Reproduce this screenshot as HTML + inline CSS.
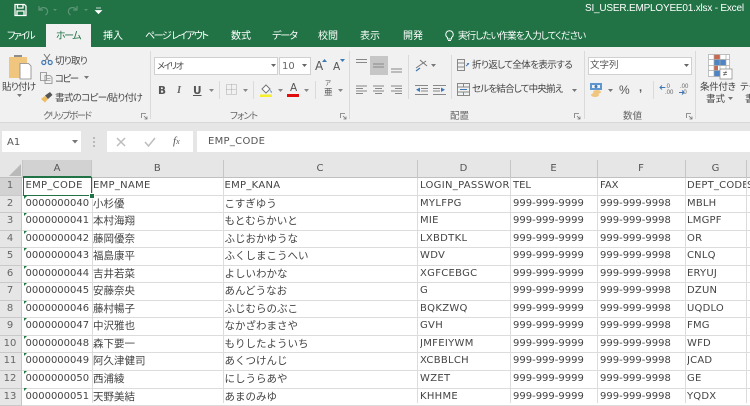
<!DOCTYPE html>
<html lang="ja"><head><meta charset="utf-8"><style>
html,body{margin:0;padding:0}
body{width:750px;height:403px;overflow:hidden;position:relative;background:#fff;font-family:"Liberation Sans","Noto Sans CJK JP",sans-serif;color:#444}
.a{position:absolute}
.t{position:absolute;white-space:nowrap;line-height:14px;font-size:9.5px;color:#444;margin-top:2px;font-feature-settings:"palt"}
.tab{color:#fff;font-size:10px;top:28px}
.lab{color:#666;font-size:9.5px;top:108px}
.sep{position:absolute;width:1px;background:#dadada}
svg{position:absolute;overflow:visible}
#grid{position:absolute;left:0;top:178px;width:750px;font-family:"DejaVu Sans","Noto Sans CJK JP",sans-serif;font-size:10px;color:#444}
.r{position:relative;height:17.55px;line-height:16.5px;box-sizing:border-box;border-bottom:1px solid #dcdcdc;white-space:nowrap}
.r span{position:absolute;top:0;overflow:hidden;height:16px}
.r .h{left:0;width:22px;background:#e6e6e6;color:#666;text-align:center;height:17.5px;border-right:1px solid #c6c6c6;border-bottom:1px solid #c9c9c9;box-sizing:border-box;font-size:10px;padding-right:1px}
.a1{left:25.5px;width:65px}.b1{left:93px;width:129px;font-size:10.5px}.c1{left:224.5px;width:192px;font-size:10.5px}.d1{left:420px;width:90px;letter-spacing:.3px}.e1{left:513px;width:84px}.f1{left:600px;width:85px}.g1{left:687px;width:60px;letter-spacing:.2px}
.v{position:absolute;top:178px;height:225px;width:1px;background:#dcdcdc}
.tri{position:absolute;left:24px;width:0;height:0;border-top:3px solid #1f7a3f;border-right:3px solid transparent;margin-top:0}
.ch{position:absolute;top:160px;height:18px;line-height:17px;text-align:center;font-family:"DejaVu Sans",sans-serif;font-size:10px;color:#555;background:#e6e6e6;border-right:1px solid #c6c6c6;border-bottom:1px solid #c0c0c0;box-sizing:border-box}
</style></head><body>

<div class="a" style="left:0;top:0;width:750px;height:47px;background:#217346"></div>
<svg style="left:14px;top:3px" width="13" height="14" viewBox="0 0 13 14"><path d="M1 1.5h9.5l1.5 1.5v9.5H1zM3.5 1.5v3.5h5.500v-3.500M3 12.500v-4.500h7v4.500" fill="none" stroke="#fff" stroke-width="1.300"/></svg>
<svg style="left:37px;top:4px" width="60" height="12" viewBox="0 0 60 12"><path d="M2 2v4h4M2.500 6c2-3.500 7-3 8 .5.4 2-.5 3.500-2 4.500" fill="none" stroke="#5d9577" stroke-width="1.200"/><path d="M16 5l2 2 2-2z" fill="#5d9577"/><path d="M40 2v4h-4M39.500 6c-2-3.500-7-3-8 .5-.4 2 .5 3.500 2 4.500" fill="none" stroke="#5d9577" stroke-width="1.200"/><path d="M47 5l2 2 2-2z" fill="#5d9577"/></svg>
<svg style="left:95px;top:7px" width="7" height="7" viewBox="0 0 7 7"><path d="M1 1h5M.5 3.500h6L3.500 6.500z" fill="#fff" stroke="#fff" stroke-width=".8"/></svg>
<div class="t" style="left:585px;top:0;color:#fff;font-size:10px;letter-spacing:-.2px">SI_USER.EMPLOYEE01.xlsx - Excel</div>

<div class="a" style="left:46px;top:24px;width:45px;height:24px;background:#f1f1f1"></div>
<div class="t tab" style="left:7px;letter-spacing:-2px">ファイル</div>
<div class="t tab" style="left:56px;color:#217346;letter-spacing:-1.500px">ホーム</div>
<div class="t tab" style="left:103px">挿入</div>
<div class="t tab" style="left:145px;letter-spacing:-1.500px">ページ レイアウト</div>
<div class="t tab" style="left:231px">数式</div>
<div class="t tab" style="left:272px;letter-spacing:-1px">データ</div>
<div class="t tab" style="left:318px">校閲</div>
<div class="t tab" style="left:360px">表示</div>
<div class="t tab" style="left:403px">開発</div>
<svg style="left:445px;top:30px" width="9" height="12" viewBox="0 0 9 12"><path d="M4.500 .7a3.700 3.700 0 0 0-2 6.800v1.500h4V7.500a3.700 3.700 0 0 0-2-6.800zM3 10.500h3" fill="none" stroke="#fff" stroke-width="1"/></svg>
<div class="t tab" style="left:458px;font-size:9.500px;letter-spacing:-.9px">実行したい作業を入力してください</div>

<div class="a" style="left:0;top:47px;width:750px;height:75px;background:#f1f1f1"></div>
<div class="a" style="left:0;top:122px;width:750px;height:38px;background:#e6e6e6;border-top:1px solid #d8d8d8;box-sizing:border-box"></div>

<svg style="left:8px;top:54px" width="24" height="26" viewBox="0 0 24 26"><path d="M1 3h18v21H1z" fill="#f0c67f"/><path d="M6 3h8V1H6z" fill="#8d8d8d"/><path d="M12 9.500h8.500l2.500 2.500v13H12z" fill="#fff" stroke="#888" stroke-width=".8"/></svg>
<div class="t" style="left:2px;top:79px;font-size:9.500px;letter-spacing:-.7px">貼り付け</div>
<svg style="left:17px;top:94px" width="6" height="4"><path d="M0 0h5L2.500 3z" fill="#777"/></svg>
<svg style="left:41px;top:53px" width="12" height="12" viewBox="0 0 12 12"><path d="M3 1l5 7M9 1L4 8" stroke="#777" fill="none"/><circle cx="2.800" cy="9.500" r="2" fill="none" stroke="#3e78b4" stroke-width="1.200"/><circle cx="9.200" cy="9.500" r="2" fill="none" stroke="#3e78b4" stroke-width="1.200"/></svg>
<div class="t" style="left:55px;top:53px;font-size:9.500px;letter-spacing:-.7px">切り取り</div>
<svg style="left:40px;top:72px" width="13" height="12" viewBox="0 0 13 12"><path d="M.5.500h6v8h-6zM5 3.500h5l2 2v6H5z" fill="#f1f1f1" stroke="#888" stroke-width=".8"/><path d="M6.500 6.500h4M6.500 8.500h4" stroke="#999" stroke-width=".7"/></svg>
<div class="t" style="left:55px;top:71px;font-size:9.500px;letter-spacing:-1.500px">コピー</div>
<svg style="left:84px;top:76px" width="5" height="3"><path d="M0 0h5L2.500 3z" fill="#777"/></svg>
<svg style="left:40px;top:91px" width="13" height="12" viewBox="0 0 13 12"><path d="M1 8l4-3 3 3-3 3.500z" fill="#eebc5f"/><path d="M5 4.500l5-3.500 2.500 3L8 8z" fill="#555"/></svg>
<div class="t" style="left:55px;top:90px;font-size:9.500px;letter-spacing:-.65px">書式のコピー/貼り付け</div>
<div class="t lab" style="left:43px;letter-spacing:-1.600px">クリップボード</div>
<svg style="left:141px;top:113px" width="7" height="7"><path d="M.5 5V.5H5M3 3l3 3M6 3.500V6H3.500" fill="none" stroke="#777" stroke-width=".8"/></svg>
<div class="sep" style="left:150px;top:51px;height:68px"></div>

<div class="a" style="left:154px;top:57px;width:124px;height:18px;background:#fff;border:1px solid #d0d0d0;box-sizing:border-box"></div>
<div class="t" style="left:157px;top:57px;font-size:9px;letter-spacing:-1.500px">メイリオ</div>
<svg style="left:271px;top:64px" width="5" height="3"><path d="M0 0h5L2.500 3z" fill="#666"/></svg>
<div class="a" style="left:279px;top:57px;width:32px;height:18px;background:#fff;border:1px solid #d0d0d0;box-sizing:border-box"></div>
<div class="t" style="left:282px;top:58px;font-size:10px;color:#666;font-family:'DejaVu Sans',sans-serif">10</div>
<svg style="left:302px;top:64px" width="5" height="3"><path d="M0 0h5L2.500 3z" fill="#666"/></svg>
<div class="t" style="left:315px;top:57px;font-size:12px;font-family:'DejaVu Sans',sans-serif;color:#555">A</div>
<svg style="left:322px;top:59px" width="5" height="4"><path d="M0 3l2.500-3 2.500 3z" fill="#3e78b4"/></svg>
<div class="t" style="left:333px;top:58px;font-size:10.500px;font-family:'DejaVu Sans',sans-serif;color:#555">A</div>
<svg style="left:340px;top:59px" width="5" height="4"><path d="M0 0h5L2.500 3z" fill="#3e78b4"/></svg>

<div class="t" style="left:158px;top:82px;font-size:10.500px;font-weight:bold;color:#555;font-family:'DejaVu Sans',sans-serif">B</div>
<div class="t" style="left:177px;top:82px;font-size:10.500px;font-style:italic;font-weight:bold;color:#666;font-family:'Liberation Serif',serif">I</div>
<div class="t" style="left:193px;top:82px;font-size:10.500px;text-decoration:underline;color:#555;font-family:'DejaVu Sans',sans-serif;font-weight:bold">U</div>
<svg style="left:209px;top:89px" width="5" height="3"><path d="M0 0h5L2.500 3z" fill="#888"/></svg>
<div class="sep" style="left:219px;top:81px;height:18px"></div>
<svg style="left:226px;top:84px" width="11" height="11"><path d="M.5.500h10v10H.5zM5.500.500v10M.5 5.500h10" fill="none" stroke="#999" stroke-width=".8" stroke-dasharray="1 1"/></svg>
<svg style="left:243px;top:89px" width="5" height="3"><path d="M0 0h5L2.500 3z" fill="#888"/></svg>
<div class="sep" style="left:253px;top:81px;height:18px"></div>
<svg style="left:260px;top:83px" width="13" height="14" viewBox="0 0 13 14"><path d="M2 6l4-4 4 4-4 4z" fill="#fff" stroke="#777"/><path d="M10 6.500l2 2.500-1 1z" fill="#3e78b4"/><path d="M0 11.500h12v2.500H0z" fill="#f5ef2c"/></svg>
<svg style="left:278px;top:89px" width="5" height="3"><path d="M0 0h5L2.500 3z" fill="#888"/></svg>
<div class="t" style="left:290px;top:79px;font-size:10.500px;font-family:'DejaVu Sans',sans-serif;color:#555">A</div>
<div class="a" style="left:287px;top:94px;width:12px;height:3px;background:#e00d0d"></div>
<svg style="left:304px;top:89px" width="5" height="3"><path d="M0 0h5L2.500 3z" fill="#888"/></svg>
<div class="sep" style="left:315px;top:81px;height:18px"></div>
<div class="t" style="left:325px;top:78px;font-size:6.500px;color:#555;line-height:8px">ア</div>
<div class="t" style="left:324px;top:86px;font-size:8.500px;color:#555;line-height:8px">亜</div>
<svg style="left:338px;top:89px" width="5" height="3"><path d="M0 0h5L2.500 3z" fill="#888"/></svg>
<div class="t lab" style="left:230px;letter-spacing:-1px">フォント</div>
<svg style="left:340px;top:113px" width="7" height="7"><path d="M.5 5V.5H5M3 3l3 3M6 3.500V6H3.500" fill="none" stroke="#777" stroke-width=".8"/></svg>
<div class="sep" style="left:349px;top:51px;height:68px"></div>

<div class="a" style="left:370px;top:56px;width:18px;height:19px;background:#c6c6c6"></div>
<svg style="left:355px;top:58px" width="50" height="15" viewBox="0 0 50 15" stroke="#888" stroke-width="1"><path d="M1 1.500h11M1 4.500h11M18 6h11M18 9h11M36 11h11M36 14h11"/></svg>
<svg style="left:355px;top:85px" width="50" height="10" viewBox="0 0 50 10" stroke="#888" stroke-width="1"><path d="M1 1h11M1 3.500h7M1 6h11M1 8.500h7M18 1h11M20 3.500h7M18 6h11M20 8.500h7M36 1h11M40 3.500h7M36 6h11M40 8.500h7"/></svg>
<div class="sep" style="left:408px;top:55px;height:44px"></div>
<svg style="left:415px;top:59px" width="14" height="13" viewBox="0 0 14 13"><path d="M1 9L11 2M5 1l7 6" stroke="#777" fill="none"/><path d="M1 12l4-3" stroke="#3e78b4" stroke-width="1.300"/></svg>
<svg style="left:431px;top:64px" width="5" height="3"><path d="M0 0h5L2.500 3z" fill="#777"/></svg>
<svg style="left:415px;top:85px" width="31" height="10" viewBox="0 0 31 10"><path d="M0 .5h13M6 3.500h7M6 6h7M0 9.500h13M18 .5h13M18 3.500h7M18 6h7M18 9.500h13" stroke="#888" fill="none"/><path d="M5 2.500L1 4.800 5 7zM26 2.500l4 2.300-4 2.200z" fill="#3e78b4"/></svg>
<div class="sep" style="left:451px;top:55px;height:44px"></div>
<svg style="left:457px;top:59px" width="13" height="13" viewBox="0 0 13 13"><path d="M.5.500h7v11h-7zM.5 4h7M.5 8h7" fill="none" stroke="#888"/><path d="M9 7l3-2.500M12 4.500l-2 .2" stroke="#3e78b4" fill="none"/></svg>
<div class="t" style="left:472px;top:57px;font-size:9.500px;letter-spacing:-.6px">折り返して全体を表示する</div>
<svg style="left:457px;top:83px" width="13" height="13" viewBox="0 0 13 13"><path d="M.5.500h12v12H.5zM.5 4h12M.5 9h12M6.500.500v3.500M6.500 9v3.500" fill="none" stroke="#888"/><path d="M3 6.500h7" stroke="#3e78b4"/></svg>
<div class="t" style="left:472px;top:81px;font-size:9.500px;letter-spacing:-.8px">セルを結合して中央揃え</div>
<svg style="left:572px;top:89px" width="5" height="3"><path d="M0 0h5L2.500 3z" fill="#777"/></svg>
<div class="t lab" style="left:450px">配置</div>
<svg style="left:574px;top:113px" width="7" height="7"><path d="M.5 5V.5H5M3 3l3 3M6 3.500V6H3.500" fill="none" stroke="#777" stroke-width=".8"/></svg>
<div class="sep" style="left:584px;top:51px;height:68px"></div>

<div class="a" style="left:588px;top:57px;width:104px;height:18px;background:#fff;border:1px solid #d0d0d0;box-sizing:border-box"></div>
<div class="t" style="left:590px;top:57px;font-size:9.500px;color:#555">文字列</div>
<svg style="left:684px;top:64px" width="5" height="3"><path d="M0 0h5L2.500 3z" fill="#666"/></svg>
<svg style="left:590px;top:83px" width="13" height="14" viewBox="0 0 13 14"><path d="M0 0h12v7H0z" fill="#5e97d0"/><path d="M2 2h8v3H2z" fill="#f1f1f1"/><circle cx="6" cy="3.500" r="1.500" fill="#3e78b4"/><ellipse cx="7" cy="9" rx="4" ry="2" fill="#f0c67f"/><ellipse cx="5" cy="12" rx="4" ry="2" fill="#f0c67f"/></svg>
<svg style="left:608px;top:89px" width="5" height="3"><path d="M0 0h5L2.500 3z" fill="#777"/></svg>
<div class="t" style="left:619px;top:81px;font-size:12px;color:#555">%</div>
<div class="t" style="left:639px;top:79px;font-size:11px;font-weight:bold;color:#555">,</div>
<div class="sep" style="left:653px;top:81px;height:18px"></div>
<div class="t" style="left:665px;top:82px;font-size:6px;line-height:6px;color:#666">.0<br>.00</div>
<div class="t" style="left:680px;top:82px;font-size:6px;line-height:6px;color:#666">.00<br>&nbsp;.0</div>
<svg style="left:659px;top:85px" width="31" height="10"><path d="M1 2.500h5M3 .5L1 2.500l2 2M20 7.500h5M23 5.500l2 2-2 2" fill="none" stroke="#3e78b4"/></svg>
<div class="t lab" style="left:623px">数値</div>
<svg style="left:686px;top:113px" width="7" height="7"><path d="M.5 5V.5H5M3 3l3 3M6 3.500V6H3.500" fill="none" stroke="#777" stroke-width=".8"/></svg>
<div class="sep" style="left:695px;top:51px;height:68px"></div>

<svg style="left:708px;top:54px" width="24" height="25" viewBox="0 0 24 25"><path d="M.5.500h21v22H.5z" fill="#fff"/><path d="M6 .5h6v5H6z" fill="#c8694f"/><path d="M6 5.500h12v6H6z" fill="#4d84c4"/><path d="M6 11.500h4v5H6z" fill="#c8694f"/><path d="M6 16.500h6v6H6z" fill="#4d84c4"/><path d="M.5.500h21v22H.5zM6 .5v22M12 .5v22M18 .5v22M.5 5.500h21M.5 11.500h21M.5 16.500h21" fill="none" stroke="#aaa" stroke-width=".7"/><path d="M12 15h12v10H12z" fill="#fff" stroke="#888" stroke-width=".7"/></svg>
<div class="t" style="left:723px;top:67px;font-size:8px;line-height:9px;color:#444">≠</div>
<div class="t" style="left:700px;top:79px;font-size:9.500px;letter-spacing:-.3px">条件付き</div>
<div class="t" style="left:706px;top:91px;font-size:9.500px">書式</div>
<svg style="left:728px;top:97px" width="5" height="3"><path d="M0 0h5L2.500 3z" fill="#777"/></svg>
<div class="t" style="left:740px;top:79px;font-size:9.500px">テーブル</div>
<div class="t" style="left:745px;top:91px;font-size:9.500px">書</div>

<div class="a" style="left:2px;top:131px;width:79px;height:21px;background:#fff"></div>
<div class="t" style="left:7px;top:134px;font-size:10px;color:#555;font-family:'DejaVu Sans',sans-serif">A1</div>
<svg style="left:72px;top:140px" width="6" height="4"><path d="M0 0h6L3 3.500z" fill="#777"/></svg>
<svg style="left:93px;top:137px" width="3" height="10"><path d="M1 0v2M1 4v2M1 8v2" stroke="#aaa" stroke-width="1.500"/></svg>
<div class="a" style="left:107px;top:131px;width:86px;height:21px;background:#fff"></div>
<svg style="left:116px;top:137px" width="10" height="10"><path d="M1 1l8 8M9 1l-8 8" stroke="#bdbdbd" stroke-width="1.500"/></svg>
<svg style="left:144px;top:137px" width="12" height="10"><path d="M1 5l3.500 4L11 1" stroke="#bdbdbd" stroke-width="1.500" fill="none"/></svg>
<div class="t" style="left:173px;top:132px;font-size:11px;font-style:italic;font-family:'Liberation Serif',serif;color:#555">f<span style="font-size:8px">x</span></div>
<div class="a" style="left:197px;top:131px;width:553px;height:21px;background:#fff"></div>
<div class="t" style="left:208px;top:133px;font-size:10px;color:#555;font-family:'DejaVu Sans',sans-serif;letter-spacing:.3px">EMP_CODE</div>

<div class="ch" style="left:0;width:23px"></div>
<svg style="left:9px;top:164px" width="12" height="12"><path d="M12 0v12H0z" fill="#b9b9b9"/></svg>
<div class="ch" style="left:23px;width:69px;background:#d2d2d2;border-bottom:2px solid #217346">A</div>
<div class="ch" style="left:92px;width:131.500px">B</div>
<div class="ch" style="left:223.500px;width:194px">C</div>
<div class="ch" style="left:417.500px;width:93px">D</div>
<div class="ch" style="left:510.500px;width:87px">E</div>
<div class="ch" style="left:597.500px;width:88px">F</div>
<div class="ch" style="left:685.500px;width:61px">G</div>
<div class="ch" style="left:746.500px;width:4px"></div>

<div id="grid">
<div class="r"><span class="h" style="background:#d2d2d2">1</span><span class="a1" style="letter-spacing:.3px">EMP_CODE</span><span class="b1" style="font-size:10px;letter-spacing:.3px">EMP_NAME</span><span class="c1" style="font-size:10px;letter-spacing:.3px">EMP_KANA</span><span class="d1">LOGIN_PASSWOR</span><span class="e1">TEL</span><span class="f1">FAX</span><span class="g1">DEPT_CODE</span><span style="left:747px">S</span></div>
<div class="r"><span class="h">2</span><span class="a1">0000000040</span><span class="b1">小杉優</span><span class="c1">こすぎゆう</span><span class="d1">MYLFPG</span><span class="e1">999-999-9999</span><span class="f1">999-999-9998</span><span class="g1">MBLH</span></div>
<div class="r"><span class="h">3</span><span class="a1">0000000041</span><span class="b1">本村海翔</span><span class="c1">もとむらかいと</span><span class="d1">MIE</span><span class="e1">999-999-9999</span><span class="f1">999-999-9998</span><span class="g1">LMGPF</span></div>
<div class="r"><span class="h">4</span><span class="a1">0000000042</span><span class="b1">藤岡優奈</span><span class="c1">ふじおかゆうな</span><span class="d1">LXBDTKL</span><span class="e1">999-999-9999</span><span class="f1">999-999-9998</span><span class="g1">OR</span></div>
<div class="r"><span class="h">5</span><span class="a1">0000000043</span><span class="b1">福島康平</span><span class="c1">ふくしまこうへい</span><span class="d1">WDV</span><span class="e1">999-999-9999</span><span class="f1">999-999-9998</span><span class="g1">CNLQ</span></div>
<div class="r"><span class="h">6</span><span class="a1">0000000044</span><span class="b1">吉井若菜</span><span class="c1">よしいわかな</span><span class="d1">XGFCEBGC</span><span class="e1">999-999-9999</span><span class="f1">999-999-9998</span><span class="g1">ERYUJ</span></div>
<div class="r"><span class="h">7</span><span class="a1">0000000045</span><span class="b1">安藤奈央</span><span class="c1">あんどうなお</span><span class="d1">G</span><span class="e1">999-999-9999</span><span class="f1">999-999-9998</span><span class="g1">DZUN</span></div>
<div class="r"><span class="h">8</span><span class="a1">0000000046</span><span class="b1">藤村暢子</span><span class="c1">ふじむらのぶこ</span><span class="d1">BQKZWQ</span><span class="e1">999-999-9999</span><span class="f1">999-999-9998</span><span class="g1">UQDLO</span></div>
<div class="r"><span class="h">9</span><span class="a1">0000000047</span><span class="b1">中沢雅也</span><span class="c1">なかざわまさや</span><span class="d1">GVH</span><span class="e1">999-999-9999</span><span class="f1">999-999-9998</span><span class="g1">FMG</span></div>
<div class="r"><span class="h">10</span><span class="a1">0000000048</span><span class="b1">森下要一</span><span class="c1">もりしたよういち</span><span class="d1">JMFEIYWM</span><span class="e1">999-999-9999</span><span class="f1">999-999-9998</span><span class="g1">WFD</span></div>
<div class="r"><span class="h">11</span><span class="a1">0000000049</span><span class="b1">阿久津健司</span><span class="c1">あくつけんじ</span><span class="d1">XCBBLCH</span><span class="e1">999-999-9999</span><span class="f1">999-999-9998</span><span class="g1">JCAD</span></div>
<div class="r"><span class="h">12</span><span class="a1">0000000050</span><span class="b1">西浦綾</span><span class="c1">にしうらあや</span><span class="d1">WZET</span><span class="e1">999-999-9999</span><span class="f1">999-999-9998</span><span class="g1">GE</span></div>
<div class="r"><span class="h">13</span><span class="a1">0000000051</span><span class="b1">天野美結</span><span class="c1">あまのみゆ</span><span class="d1">KHHME</span><span class="e1">999-999-9999</span><span class="f1">999-999-9998</span><span class="g1">YQDX</span></div>
</div>

<div class="v" style="left:91.500px"></div><div class="v" style="left:223px"></div><div class="v" style="left:417px"></div><div class="v" style="left:510px"></div><div class="v" style="left:597px"></div><div class="v" style="left:685px"></div><div class="v" style="left:746px"></div>

<div class="tri" style="top:195.500px"></div><div class="tri" style="top:213px"></div><div class="tri" style="top:230.500px"></div><div class="tri" style="top:248px"></div><div class="tri" style="top:265.500px"></div><div class="tri" style="top:283px"></div><div class="tri" style="top:300.500px"></div><div class="tri" style="top:318px"></div><div class="tri" style="top:335.500px"></div><div class="tri" style="top:353px"></div><div class="tri" style="top:370.500px"></div><div class="tri" style="top:388px"></div>

<div class="a" style="left:23px;top:177px;width:69px;height:19px;border:1.500px solid #217346;box-sizing:border-box"></div>
<div class="a" style="left:89.500px;top:193.500px;width:4px;height:4px;background:#217346;border:1px solid #fff;box-sizing:content-box;margin:-1px"></div>
</body></html>
